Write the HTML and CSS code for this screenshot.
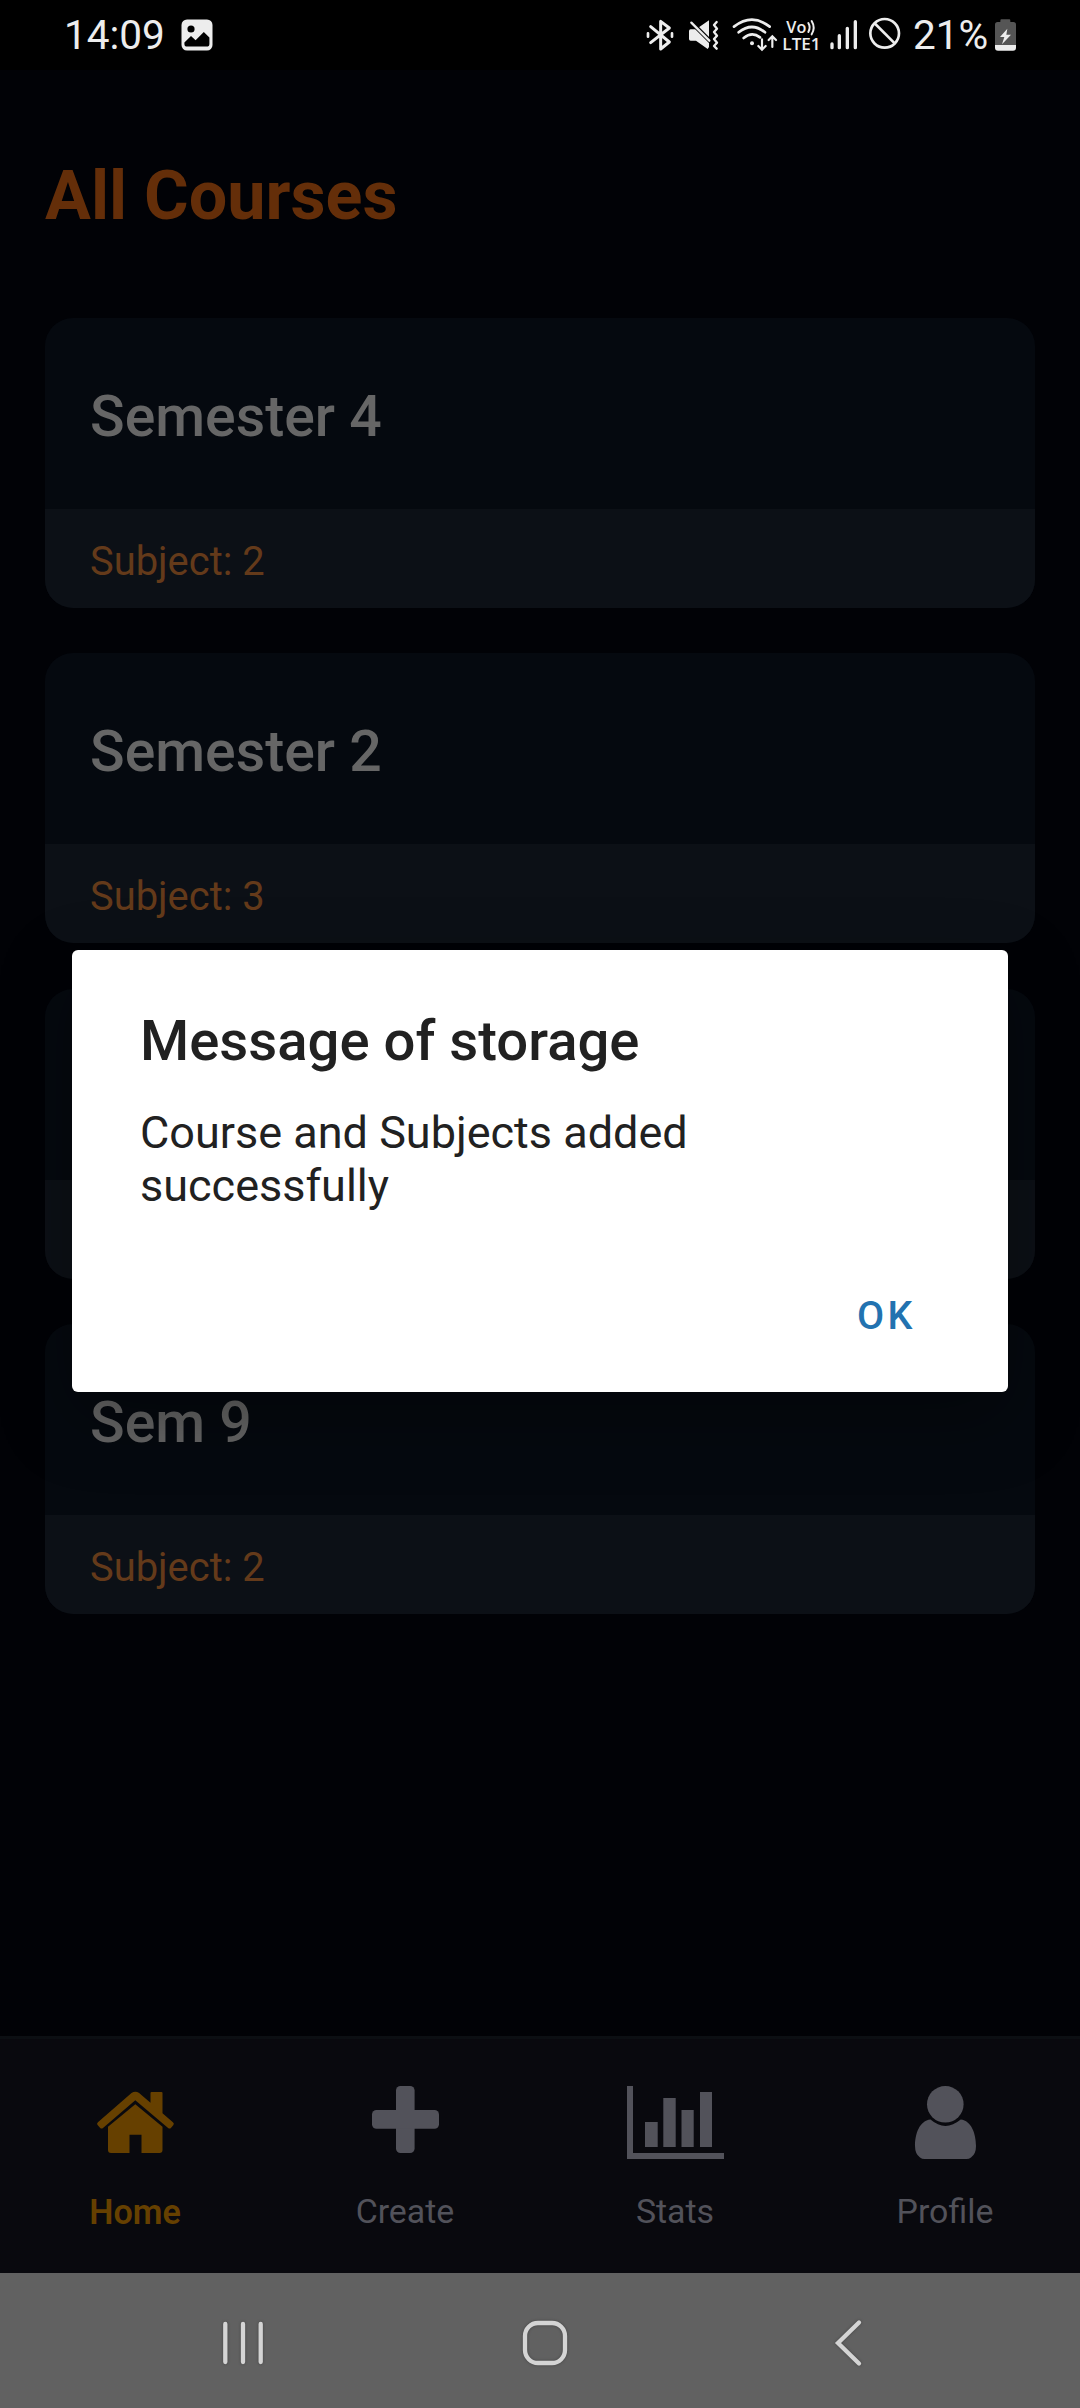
FILE: index.html
```html
<!DOCTYPE html>
<html lang="en">
<head>
<meta charset="utf-8">
<title>All Courses</title>
<link rel="stylesheet" href="styles.css">
</head>
<body>
<div class="screen">
  <header class="status">
    <span class="clock">14:09</span>
    <svg class="picture" width="32" height="32" viewBox="0 0 32 32"><rect x=".5" y=".5" width="31" height="31" rx="5.5" fill="#ededed"/><circle cx="10" cy="10" r="3.6" fill="#000"/><path d="M3.4 23.5 10 17l4.6 4.2 8.2-8.2 5.6 5.6V25q0 2.6-2.8 2.6H6.2q-2.8 0-2.8-2.6z" fill="#000"/></svg>
    <div class="indicators">
      <svg width="36" height="70" viewBox="75 0 108 210" fill="none" stroke="#ededed" stroke-width="9" stroke-linecap="round" stroke-linejoin="round"><path d="M92 80l56 46-26 21V64l26 20-56 44"/><path d="M84 100v10M156 100v10" stroke-width="8"/></svg>
      <svg width="46" height="70" viewBox="183 0 138 210"><path d="M212 88h16l39-27v80l-4 6-35-25h-16q-5 0-5-5V93q0-5 5-5z" fill="#ededed"/><path d="M204 57l72 72" stroke="#000" stroke-width="13"/><path d="M214 68l54 54" stroke="#ededed" stroke-width="7" stroke-linecap="round"/><path d="M290 66l-8 9 9 11-9 10 9 11-9 10 9 11-9 10 8 8" fill="none" stroke="#ededed" stroke-width="7" stroke-linecap="round" stroke-linejoin="round"/></svg>
      <svg width="53" height="70" viewBox="321 0 159 210" fill="none" stroke="#ededed" stroke-width="8" stroke-linecap="round"><path d="M342 80q54-42 107 0M356 97q40-32 79 0M371 114q25-20 49-2"/><circle cx="396" cy="130" r="6" fill="#ededed" stroke="none"/><path d="M426 118v29m-11-9l11 11 11-11M457 141v-30m-11 9l11-11 11 11" stroke-width="6.5"/></svg>
      <svg width="45" height="70" viewBox="480 0 135 210"><text class="volte" x="499" y="98" textLength="60" lengthAdjust="spacingAndGlyphs" font-size="48">Vo</text><path d="M565 69q8 13 0 27M575 63q12 20 0 40" fill="none" stroke="#ededed" stroke-width="6" stroke-linecap="round"/><text class="volte" x="487" y="150" textLength="115" lengthAdjust="spacingAndGlyphs" font-size="51">LTE1</text></svg>
      <svg width="40" height="70" viewBox="615 0 120 210" stroke="#ededed" stroke-width="10" stroke-linecap="round"><path d="M636 132v11M658 107v36M682 85v58M706 65v78"/></svg>
      <svg width="43" height="70" viewBox="735 0 129 210" fill="none" stroke="#ededed" stroke-width="8"><circle cx="794" cy="100" r="43"/><path d="M763 69l62 62"/></svg>
      <span class="percent">21%</span>
      <svg width="26" height="70" viewBox="1119 0 78 210"><path d="M1144 58h24q3 0 3 4v4h9q8 0 8 8v61h-63V74q0-8 8-8h8v-4q0-4 3-4z" fill="#555"/><path d="M1125 135h63v8q0 9-9 9h-45q-9 0-9-9z" fill="#ededed"/><path d="M1162 86l-22 25h13l-7 22 27-29h-14z" fill="#ededed"/></svg>
    </div>
  </header>

  <main class="content">
    <h1 class="title">All Courses</h1>
    <section class="card"><h2 class="card-name">Semester 4</h2><p class="card-info">Subject: 2</p></section>
    <section class="card"><h2 class="card-name">Semester 2</h2><p class="card-info">Subject: 3</p></section>
    <section class="card"><h2 class="card-name"></h2><p class="card-info"></p></section>
    <section class="card"><h2 class="card-name">Sem 9</h2><p class="card-info">Subject: 2</p></section>
  </main>

  <nav class="tabs">
    <div class="tab active">
      <svg class="tab-icon" viewBox="0 0 110 84"><path d="M51.5 13q3.8-2.7 7.6 0l11.4 9.8V13q0-1 1-1h10q1 0 1 1v20.3l10.4 9q1.6 1.3.5 2.8l-2.5 2.8q-1.3 1.2-2.8 0L55.3 20.3 23 47.9q-1.4 1.2-2.8 0l-2.6-2.9q-1.3-1.4.3-2.8z"/><path d="M55.3 24.3 82.5 46.7V70q0 3-3 3h-18V54.7h-12V73H31q-3 0-3-3V46.7z"/></svg>
      <span>Home</span>
    </div>
    <div class="tab">
      <svg class="tab-icon" viewBox="0 0 110 84"><rect x="46" y="6" width="18.6" height="67" rx="4.5"/><rect x="22" y="30" width="67" height="18.7" rx="4.5"/></svg>
      <span>Create</span>
    </div>
    <div class="tab">
      <svg class="tab-icon" viewBox="0 0 110 84"><path d="M7 6h6v67h91v6H7zM25 42h12.7v25H25zM43.3 18h12.4v49H43.3zM61.5 30h12.2v37H61.5zM80 12h12v55H80z"/></svg>
      <span>Stats</span>
    </div>
    <div class="tab">
      <svg class="tab-icon" viewBox="0 0 110 84"><circle cx="55.3" cy="24.3" r="18.3"/><path d="M40.5 39.5q14.8 12.8 30.2 0C81.5 40.5 86 54 86 66q0 8-5 11.500-2 1.500-4.500 1.500h-42q-2.500 0-4.500-1.500Q25 74 25 66c0-12 4.500-25.500 15.500-26.500z"/></svg>
      <span>Profile</span>
    </div>
  </nav>

  <footer class="navbar">
    <svg width="60" height="60" viewBox="0 0 60 60"><path d="M12.300 11v38M30 11v38M47.700 11v38"/></svg>
    <svg width="60" height="60" viewBox="0 0 60 60"><rect x="10" y="10" width="40" height="40" rx="13"/></svg>
    <svg width="60" height="60" viewBox="0 0 60 60"><path d="M42 9.500 21 30l21 20.500"/></svg>
  </footer>

  <div class="dialog" role="alertdialog">
    <h2 class="dialog-title">Message of storage</h2>
    <p class="dialog-text">Course and Subjects added successfully</p>
    <span class="dialog-ok">OK</span>
  </div>
</div>
</body>
</html>
```
FILE: styles.css
```css
* { box-sizing: border-box; margin: 0; padding: 0; }
body { background: #010206; font-family: Roboto, "Liberation Sans", sans-serif; }
svg { display: block; flex: none; }
.screen { position: relative; width: 1080px; height: 2408px; display: flex; flex-direction: column; overflow: hidden; }

.status { height: 70px; padding: 0 61px 0 64px; display: flex; align-items: center; background: #000; color: #ededed; font-size: 40.500px; line-height: 71px; }
.clock { width: 117px; }
.indicators { margin-left: auto; display: flex; align-items: center; }
.percent { width: 85px; padding-left: 5px; }
.volte { font-family: "Open Sans", Roboto, sans-serif; font-weight: 600; fill: #ededed; }

.content { flex: 1; padding: 86px 45px 0; display: flex; flex-direction: column; gap: 45.300px; }
.title { height: 116.700px; line-height: 81px; font-size: 68.300px; font-weight: 700; color: #642e09; }
.card { height: 290px; flex: none; border-radius: 28px; overflow: hidden; display: flex; flex-direction: column; background: #05090f; }
.card-name { height: 191px; padding-left: 45px; line-height: 197px; font-size: 57.200px; font-weight: 500; color: #666; }
.card-info { flex: 1; padding-left: 45px; line-height: 105px; font-size: 39.900px; color: #643a1a; background: #0c1016; }

.tabs { height: 237px; border-top: 3px solid #0c0f13; background: #09090e; display: grid; grid-template-columns: repeat(4, 1fr); }
.tab { display: flex; flex-direction: column; align-items: center; padding-top: 41px; color: #52525a; font-size: 33.900px; line-height: 40px; gap: 28px; }
.tab-icon { width: 110px; height: 84px; fill: currentColor; }
.active { color: #664000; }
.active span { font-size: 34.200px; font-weight: 600; }

.navbar { height: 135px; padding: 4px 82px 0 92px; background: #616161; display: grid; grid-template-columns: repeat(3, 302px); place-items: center; }
.navbar svg { fill: none; stroke: #d4d4d4; stroke-width: 4.300; stroke-linecap: round; filter: drop-shadow(0 0 1.500px rgba(0, 0, 0, .3)); }

.dialog { position: absolute; left: 72px; top: 950px; width: 936px; height: 442px; padding: 58px 68px 0; border-radius: 6px; background: #fff; color: #212121; box-shadow: 0 25px 70px rgba(0, 0, 0, .35); display: flex; flex-direction: column; }
.dialog-title { font-size: 56.250px; font-weight: 500; line-height: 67px; }
.dialog-text { margin-top: 31px; width: 600px; font-size: 45px; line-height: 53px; }
.dialog-ok { margin: 81px 24px 0 0; align-self: flex-end; font-size: 39.400px; font-weight: 500; line-height: 46px; letter-spacing: 3.500px; color: #2272b0; }
```
